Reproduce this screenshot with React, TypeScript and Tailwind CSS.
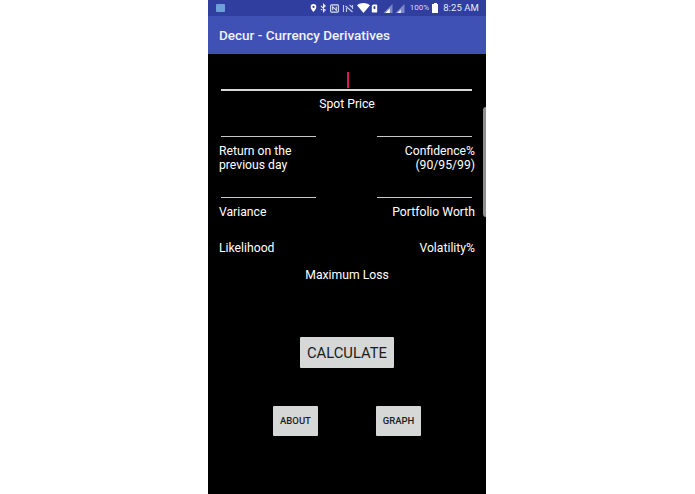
const font = { fontFamily: "Roboto, sans-serif" };

function StatusIcons() {
  return (
    <div className="flex items-center">
      {/* location */}
      <svg width="7" height="10" viewBox="0 0 9 11">
        <path d="M4.5 0.5a3.6 3.6 0 0 0-3.6 3.6c0 2.6 3.6 6.4 3.6 6.4s3.6-3.8 3.6-6.4A3.6 3.6 0 0 0 4.5 0.5zm0 5a1.4 1.4 0 1 1 0-2.8 1.4 1.4 0 0 1 0 2.8z" fill="#fff" />
      </svg>
      {/* bluetooth */}
      <svg width="7" height="10" viewBox="0 0 8 10" className="ml-[3px]">
        <path d="M1 2.7l5 4.6L4 9.2V.8l2 1.9-5 4.6" fill="none" stroke="#e8eaf6" strokeWidth="1.2" />
      </svg>
      {/* nfc */}
      <svg width="9" height="9" viewBox="0 0 10 10" className="ml-[3px]">
        <rect x="0.7" y="1" width="8.6" height="8" rx="1" fill="none" stroke="#dfe2f3" strokeWidth="1.2" />
        <path d="M3 7V3l4 4V3" fill="none" stroke="#dfe2f3" strokeWidth="1.2" />
      </svg>
      {/* muted vibrate */}
      <svg width="12" height="9" viewBox="0 0 11 9" className="ml-[3px]">
        <path d="M1 1v7M3 2l7 6M4 8V4M7 1l3 2.5M10 1v4" fill="none" stroke="#c5cae9" strokeWidth="1.1" />
      </svg>
      {/* wifi with data badge */}
      <svg width="13" height="10" viewBox="0 0 13 10" className="ml-[3px]">
        <path d="M0 2.2C3.8-.7 9.2-.7 13 2.2L6.5 10z" fill="#fff" />
      </svg>
      <svg width="7" height="9" viewBox="0 0 7 10" className="ml-px">
        <path d="M2 .5h3.5a1 1 0 0 1 1 1v7a1 1 0 0 1-1 1h-4a1 1 0 0 1-1-1V2z" fill="#fff" />
        <rect x="2.5" y="2.5" width="2" height="3" fill="#3041a3" />
      </svg>
      {/* signal bars */}
      <svg width="10" height="9" viewBox="0 0 10 10" className="ml-[5px]">
        <path d="M0 10L10 0v10z" fill="#7d88c9" />
        <path d="M2 10l5-5v5z" fill="#fff" />
      </svg>
      <svg width="10" height="9" viewBox="0 0 10 10" className="ml-[2px]">
        <path d="M0 10L10 0v10z" fill="#7d88c9" />
        <path d="M2 10l4-4v4z" fill="#e8eaf6" />
      </svg>
    </div>
  );
}

function StatusBar() {
  return (
    <div className="flex h-4 items-center bg-[#303f9f] pl-2 pr-[7px]">
      <div className="h-[8px] w-[9px] rounded-[1px] bg-[#6d9fd8]" />
      <div className="ml-auto flex items-center">
        <StatusIcons />
        <span className="ml-[5px] text-[8px] text-[#d5d9ef]">100%</span>
        <div className="ml-[3px] flex flex-col items-center">
          <div className="h-px w-[3px] bg-white" />
          <div className="h-[9px] w-[6px] bg-white" />
        </div>
        <span className="ml-[5px] text-[9.5px] tracking-[0.1px] text-[#e8eaf6]">8:25 AM</span>
      </div>
    </div>
  );
}

function Field({ align, children }: { align: "left" | "right"; children: React.ReactNode }) {
  return (
    <div className={align === "left" ? "w-[106px]" : "flex w-[106px] flex-col items-end"}>
      <div className={align === "left" ? "ml-[2px] h-px w-[95px] bg-[#c8c8c8]" : "mr-[3px] h-px w-[95px] bg-[#c8c8c8]"} />
      <div className={align === "left" ? "mt-[7px] text-left text-[12.2px] leading-[14px] text-white" : "mt-[7px] text-right text-[12.2px] leading-[14px] text-white"}>
        {children}
      </div>
    </div>
  );
}

function SmallButton({ label }: { label: string }) {
  return (
    <button className="h-[30px] w-[45px] rounded-[1px] bg-[#d6d7d7] pt-px text-[9.5px] font-medium text-[#1c1c1c]">
      {label}
    </button>
  );
}

export default function App() {
  return (
    <div className="relative h-[494px] w-[695px] overflow-hidden bg-white" style={font}>
      <div className="ml-[208px] flex h-full w-[278px] flex-col bg-black">
        <StatusBar />
        <div className="flex h-[38px] items-center bg-[#3f51b5] pl-[11px] text-[13.5px] font-medium text-[#f1f2fa]">
          Decur - Currency Derivatives
        </div>

        <div className="flex flex-col items-center pt-[18px]">
          <div className="ml-px h-[16px] w-[2px] bg-[#d81b60]" />
          <div className="mt-[1px] h-[2px] w-[251px] self-start ml-[13px] bg-[#d8d8d8]" />
          <div className="mt-[6px] text-[12.2px] leading-[14px] text-white">Spot Price</div>
        </div>

        <div className="mt-[25px] flex justify-between px-[11px]">
          <Field align="left">Return on the<br />previous day</Field>
          <Field align="right">Confidence%<br />(90/95/99)</Field>
        </div>
        <div className="mt-[25px] flex justify-between px-[11px]">
          <Field align="left">Variance</Field>
          <Field align="right">Portfolio Worth</Field>
        </div>

        <div className="mt-[22px] flex justify-between px-[11px] text-[12.2px] leading-[14px] text-white">
          <span>Likelihood</span>
          <span>Volatility%</span>
        </div>
        <div className="mt-[13px] text-center text-[12.2px] leading-[14px] text-white">Maximum Loss</div>

        <div className="mt-[55px] flex justify-center">
          <button className="h-[31px] w-[94px] rounded-[1px] bg-[#d6d7d7] pt-px text-[14.8px] text-[#1c1c1c]">
            CALCULATE
          </button>
        </div>

        <div className="mt-[38px] flex justify-center gap-[58px]">
          <SmallButton label="ABOUT" />
          <SmallButton label="GRAPH" />
        </div>
      </div>
      {/* phone side edge */}
      <div className="absolute left-[483px] top-[107px] h-[110px] w-[3px] rounded-l-[4px] bg-[#8f8f8f]" />
    </div>
  );
}
